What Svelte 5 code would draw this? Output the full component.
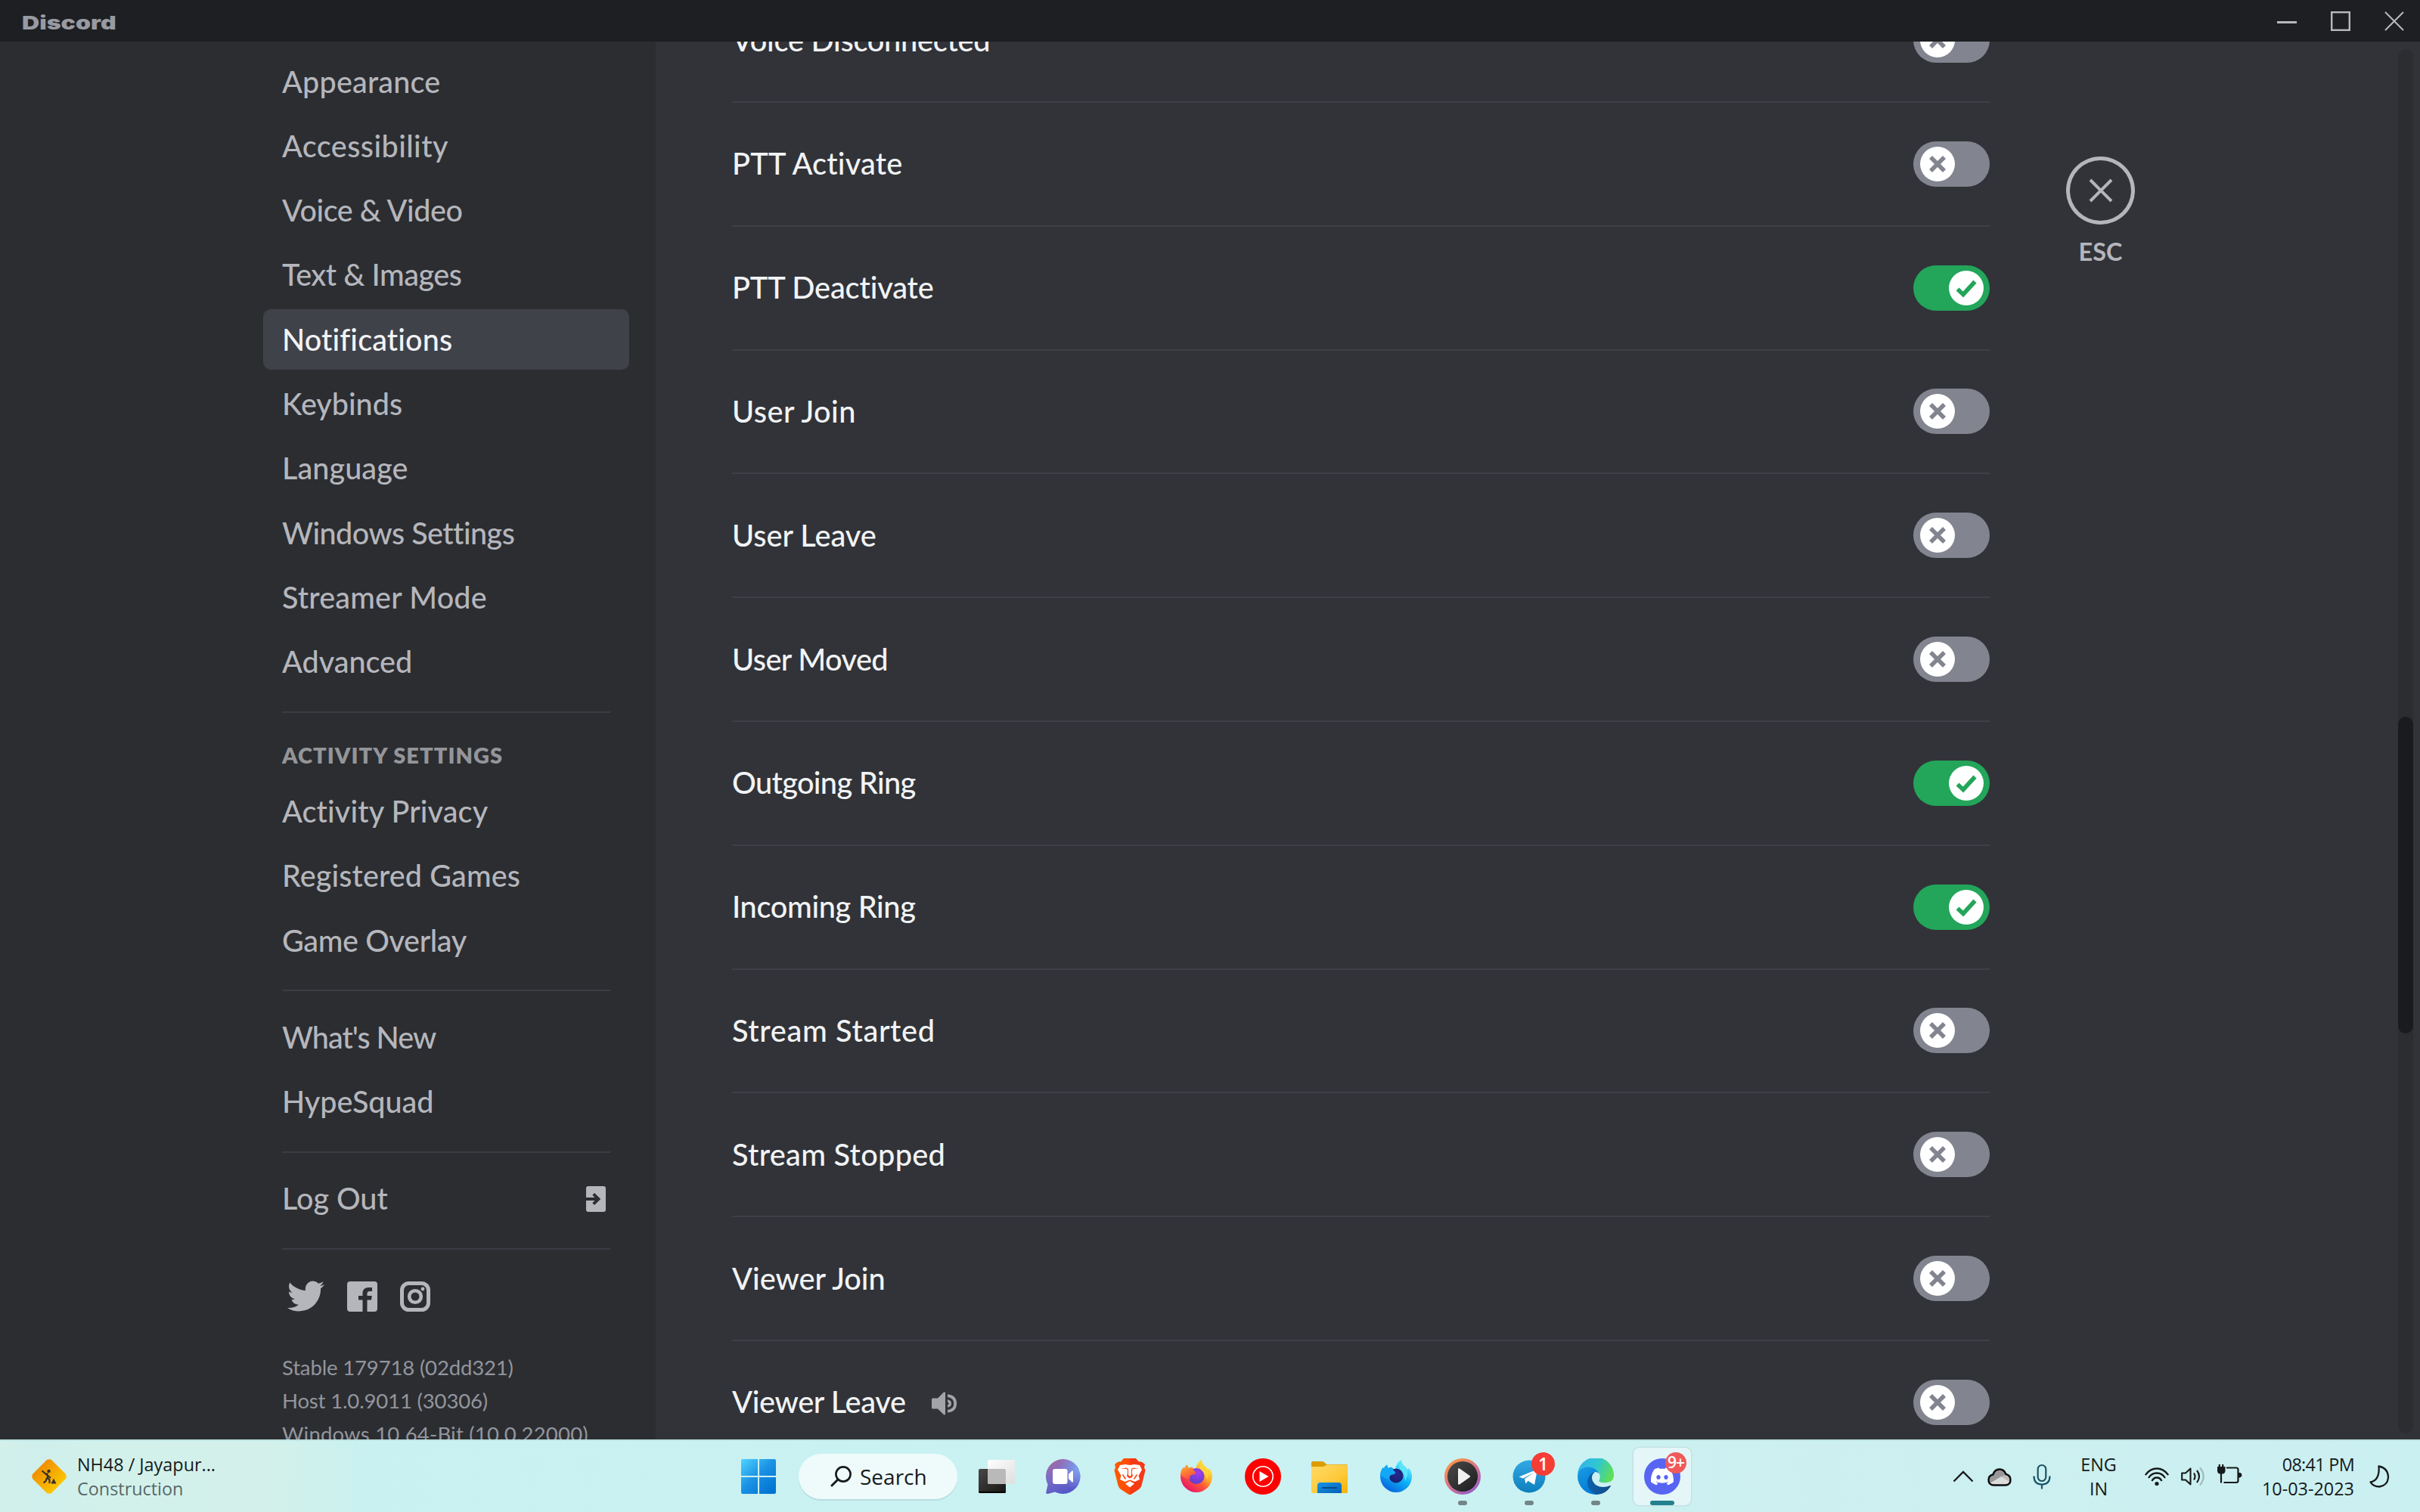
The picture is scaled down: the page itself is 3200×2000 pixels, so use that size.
<script>
  // `track` is the letter-spacing of a label in pixels.
  const nav = [
    { name: 'Appearance', track: 0.2 },
    { name: 'Accessibility', track: 0.45 },
    { name: 'Voice & Video', track: -0.45 },
    { name: 'Text & Images', track: -0.45 },
    { name: 'Notifications', track: 0.16, active: true },
    { name: 'Keybinds', track: 0 },
    { name: 'Language', track: 0.1 },
    { name: 'Windows Settings', track: -0.5 },
    { name: 'Streamer Mode', track: 0.2 },
    { name: 'Advanced', track: 0 }
  ];
  const activity = [
    { name: 'Activity Privacy', track: 0.15 },
    { name: 'Registered Games', track: 0.13 },
    { name: 'Game Overlay', track: -0.35 }
  ];
  const more = [
    { name: "What's New", track: -1 },
    { name: 'HypeSquad', track: 0 }
  ];
  const build = [
    { name: 'Stable 179718 (02dd321)', track: -0.15 },
    { name: 'Host 1.0.9011 (30306)', track: -0.15 },
    { name: 'Windows 10 64-Bit (10.0.22000)', track: 0.2 }
  ];
  const sounds = [
    { name: 'Voice Disconnected', track: -0.25, on: false },
    { name: 'PTT Activate', track: 0.2, on: false },
    { name: 'PTT Deactivate', track: -0.15, on: true },
    { name: 'User Join', track: 0.45, on: false },
    { name: 'User Leave', track: 0, on: false },
    { name: 'User Moved', track: -0.6, on: false },
    { name: 'Outgoing Ring', track: -0.65, on: true },
    { name: 'Incoming Ring', track: -0.35, on: true },
    { name: 'Stream Started', track: 0.65, on: false },
    { name: 'Stream Stopped', track: 0.3, on: false },
    { name: 'Viewer Join', track: 0, on: false },
    { name: 'Viewer Leave', track: -0.35, on: false, preview: true }
  ];
</script>

{#snippet entry(item)}
  <div class="item" class:active={item.active} style="letter-spacing: {item.track}px">{item.name}</div>
{/snippet}

<div class="screen">
  <header class="titlebar">
    <span class="wordmark">Discord</span>
    <div class="controls">
      <svg width="28" height="28" viewBox="0 0 28 28"><path d="M1 15.500H27" stroke-width="3" /></svg>
      <svg width="28" height="28" viewBox="0 0 28 28"><rect x="2.200" y="2.200" width="23.600" height="23.600" stroke-width="2.400" /></svg>
      <svg width="28" height="28" viewBox="0 0 28 28"><path d="M2 2L26 26M26 2L2 26" stroke-width="2" /></svg>
    </div>
  </header>

  <main class="window">
    <nav class="sidebar">
      {#each nav as item}{@render entry(item)}{/each}
      <hr />
      <h2>ACTIVITY SETTINGS</h2>
      {#each activity as item}{@render entry(item)}{/each}
      <hr />
      {#each more as item}{@render entry(item)}{/each}
      <hr />
      <div class="item">
        Log Out
        <svg class="logout" width="26" height="34" viewBox="0 0 26 34">
          <path fill="currentColor" d="M3 0H23Q26 0 26 3V31Q26 34 23 34H3Q0 34 0 31V19H11.500L8.300 22.200L11.100 25L19.200 17L11.100 9L8.300 11.800L11.500 15H0V3Q0 0 3 0Z" />
        </svg>
      </div>
      <hr />
      <div class="social">
        <svg width="49" height="49" viewBox="0 0 24 24"><path fill="currentColor" d="M23.953 4.570a10 10 0 01-2.825.775 4.958 4.958 0 002.163-2.723c-.951.555-2.005.959-3.127 1.184a4.920 4.920 0 00-8.384 4.482C7.690 8.095 4.067 6.130 1.640 3.162a4.822 4.822 0 00-.666 2.475c0 1.710.870 3.213 2.188 4.096a4.904 4.904 0 01-2.228-.616v.060a4.923 4.923 0 003.946 4.827 4.996 4.996 0 01-2.212.085 4.936 4.936 0 004.604 3.417 9.867 9.867 0 01-6.102 2.105c-.390 0-.779-.023-1.170-.067a13.995 13.995 0 007.557 2.209c9.053 0 13.998-7.496 13.998-13.985 0-.210 0-.420-.015-.630A9.935 9.935 0 0024 4.590z" /></svg>
        <svg width="40" height="40" viewBox="0 0 40 40"><path fill="currentColor" d="M4 0H36Q40 0 40 4V36Q40 40 36 40H26.500V24.500H32L32.800 19H26.500V16Q26.500 13 29.800 13H33V8H28.500Q20.500 8 20.500 16V19H15V24.500H20.500V40H4Q0 40 0 36V4Q0 0 4 0Z" /></svg>
        <svg width="40" height="40" viewBox="0 0 40 40" fill="none" stroke="currentColor"><rect x="2.500" y="2.500" width="35" height="35" rx="9" stroke-width="5" /><circle cx="20" cy="20" r="7.800" stroke-width="4.600" /><circle cx="30" cy="10" r="2.400" fill="currentColor" stroke="none" /></svg>
      </div>
      <div class="build">
        {#each build as line}
          <span style="letter-spacing: {line.track}px">{line.name}</span>
        {/each}
      </div>
    </nav>

    <section class="content">
      <div class="sounds">
        {#each sounds as s}
          <div class="row">
            <span class="label" style="letter-spacing: {s.track}px">{s.name}</span>
            {#if s.preview}
              <svg class="preview" width="33" height="31" viewBox="0 0 33 31"><path fill="currentColor" d="M1.500 8.500H8L16 .500Q18 -.300 18 1.500V29.500Q18 31 16 30.300L8 22.500H1.500Q0 22.500 0 21V10Q0 8.500 1.500 8.500ZM21 3.300Q33 4.500 33 15.500T21 27.500V24Q29.300 23 29.300 15.500T21 7ZM21 10.200Q26 11 26 15.500T21 20.600V17.500Q22.500 17 22.500 15.500T21 13.500Z" /></svg>
            {/if}
            <div class="toggle" class:on={s.on}>
              <div class="knob">
                <svg width="46" height="46" viewBox="0 0 46 46" fill="none" stroke="currentColor" stroke-width="5.600">
                  {#if s.on}<path d="M11.500 24.500L19 31.500L34.500 14.500" />{:else}<path d="M14 14L32 32M32 14L14 32" />{/if}
                </svg>
              </div>
            </div>
          </div>
        {/each}
      </div>
      <div class="close">
        <div class="ring">
          <svg width="34" height="34" viewBox="0 0 34 34"><path d="M3 3L31 31M31 3L3 31" stroke="currentColor" stroke-width="4" /></svg>
        </div>
        <span>ESC</span>
      </div>
      <div class="track"><div class="thumb"></div></div>
    </section>
  </main>

  <footer class="taskbar">
    <div class="widget">
      <svg width="46" height="46" viewBox="0 0 46 46">
        <defs><linearGradient id="sign" x1="0" y1="0" x2="1" y2="1"><stop offset=".2" stop-color="#f08c00" /><stop offset=".8" stop-color="#fcc800" /></linearGradient></defs>
        <path fill="url(#sign)" d="M19.500 1.500Q23 -1 26.500 1.500L44.500 19.500Q47 23 44.500 26.500L26.500 44.500Q23 47 19.500 44.500L1.500 26.500Q-1 23 1.500 19.500Z" />
        <circle cx="22.500" cy="16" r="2.200" fill="#36322c" />
        <path d="M13.500 15.500L25 25M17 19.500L20.500 19.500L21 25L23.500 27.500V32M20 25L18.500 29L15.500 31.500" stroke="#36322c" stroke-width="2.200" fill="none" />
        <path d="M25.500 32.500L29 25.500L32.500 32.500Z" fill="#36322c" />
      </svg>
      <div class="lines"><span>NH48 / Jayapur...</span><span class="dim">Construction</span></div>
    </div>

    <div class="apps">
      <div class="app">
        <svg width="46" height="46" viewBox="0 0 46 46">
          <defs><linearGradient id="win" gradientUnits="userSpaceOnUse" x1="0" y1="0" x2="40" y2="44"><stop offset="0" stop-color="#4fd4ff" /><stop offset=".5" stop-color="#1c93e4" /><stop offset="1" stop-color="#0073d2" /></linearGradient></defs>
          <path fill="url(#win)" d="M2 0H22V22H0V2Q0 0 2 0ZM24 0H44Q46 0 46 2V22H24ZM0 24H22V46H2Q0 46 0 44ZM24 24H46V44Q46 46 44 46H24Z" />
        </svg>
      </div>
      <div class="search">
        <svg width="28" height="28" viewBox="0 0 28 28" fill="none" stroke="#161a1b"><circle cx="17" cy="11" r="9.600" stroke-width="2.600" /><path d="M10 18L2 26" stroke-width="3" stroke-linecap="round" /></svg>
        <span>Search</span>
      </div>
      <div class="app">
        <svg width="48" height="48" viewBox="0 0 48 48">
          <defs><linearGradient id="tvd" x1="0" y1="0" x2="1" y2="1"><stop offset="0" stop-color="#4a4845" /><stop offset="1" stop-color="#161616" /></linearGradient><linearGradient id="tvl" x1="0" y1="0" x2="1" y2="1"><stop offset="0" stop-color="#fff" /><stop offset="1" stop-color="#dedede" /></linearGradient></defs>
          <rect x="0" y="14" width="36" height="32" rx="2" fill="url(#tvd)" /><path d="M0 44H36Q36 46 34 46H2Q0 46 0 44Z" fill="#000" />
          <rect x="12" y="2" width="36" height="32" rx="2" fill="url(#tvl)" /><path d="M12 14H34Q36 14 36 16V34H14Q12 34 12 32Z" fill="#b9b9b9" />
        </svg>
      </div>
      <div class="app">
        <svg width="48" height="48" viewBox="0 0 48 48">
          <defs><linearGradient id="chat" x1=".1" y1=".1" x2=".5" y2="1"><stop offset="0" stop-color="#a06aa8" /><stop offset=".45" stop-color="#7a6cc6" /><stop offset="1" stop-color="#5558c8" /></linearGradient><radialGradient id="chat2" cx=".95" cy=".3" r=".6"><stop offset="0" stop-color="#7ea2f2" /><stop offset="1" stop-color="#7ea2f2" stop-opacity="0" /></radialGradient></defs>
          <path fill="url(#chat)" d="M24 1A23 23 0 1 1 13 44.500L3.500 47Q1 47.500 1.200 45L3.500 34.500A23 23 0 0 1 24 1Z" /><path fill="url(#chat2)" d="M24 1A23 23 0 1 1 13 44.500L3.500 47Q1 47.500 1.200 45L3.500 34.500A23 23 0 0 1 24 1Z" />
          <rect x="10" y="14" width="19.500" height="20" rx="3" fill="#fff" /><path d="M31 21L35.500 16.500Q37 16 37 17.500V30.500Q37 32 35.500 31.500L31 27Z" fill="#fff" />
        </svg>
      </div>
      <div class="app">
        <svg width="48" height="48" viewBox="0 0 48 48">
          <defs><linearGradient id="brave" x1="0" y1="0" x2="1" y2="0"><stop offset="0" stop-color="#ff5a00" /><stop offset=".5" stop-color="#ff4a08" /><stop offset=".52" stop-color="#f43a14" /><stop offset="1" stop-color="#f53a18" /></linearGradient></defs>
          <path fill="url(#brave)" d="M16 0H32L36 4.500Q40 3.500 44 8L43 12L44.500 16L39.500 36Q38.500 39 36 41L26 47.500Q24 48.500 22 47.500L12 41Q9.500 39 8.500 36L3.500 16L5 12L4 8Q8 3.500 12 4.500Z" />
          <path fill="#fff" d="M24 9L30 8L37 9L40 15L35.500 23L37 28L30.500 31L24 28.500L17.500 31L11 28L12.500 23L8 15L11 9L18 8Z" />
          <path fill="#f8471a" d="M12 13.500L20 14L21 15.500V20L20 23L21 25L24 26.500L27 25L28 23L27 20V15.500L28 14L36 13.500L28.500 12.500L26 14V22L24 24L22 22V14L19.500 12.500Z" />
          <path d="M14.500 21.500L18.500 27.500M33.500 21.500L29.500 27.500" stroke="#f8471a" stroke-width="1.600" fill="none" />
          <path fill="#fff" d="M24 30L30 33.500L24 38.500L18 33.500Z" />
        </svg>
      </div>
      <div class="app">
        <svg width="48" height="48" viewBox="0 0 48 48">
          <defs><linearGradient id="ff" x1=".85" y1=".1" x2=".2" y2=".95"><stop offset="0" stop-color="#fff04a" /><stop offset=".35" stop-color="#ffb02a" /><stop offset=".6" stop-color="#ff5a36" /><stop offset="1" stop-color="#e6106e" /></linearGradient><linearGradient id="fft" x1="0" y1="0" x2=".5" y2="1"><stop offset="0" stop-color="#ffb62a" /><stop offset="1" stop-color="#ff4b3e" /></linearGradient><radialGradient id="ffp" cx=".6" cy=".3" r=".8"><stop offset="0" stop-color="#a93cf0" /><stop offset="1" stop-color="#5540c8" /></radialGradient></defs>
          <path fill="url(#ff)" d="M24 45A21 21 0 0 1 3 24Q3 16 7 12L8 14Q9 10 12 8.500L13 13Q18 12 23 15Q24 6 30.500 1.500Q31.500 8 37 12Q38.500 13 39 15L41 13Q45 18 45 24A21 21 0 0 1 24 45Z" />
          <circle cx="24" cy="23.500" r="10.500" fill="url(#ffp)" />
          <path fill="url(#fft)" d="M3.300 22Q4 15 7 12L8 14Q9 10 12 8.500L13.500 13Q17 10.500 20 13Q19 16 23.500 18L22 21L17.500 22Q14 24 16 28Q8 26 3.300 22Z" />
          <path fill="#ffd53a" d="M30.500 1.500Q31.500 8 37 12Q42 19 38 28Q36 20 29 14Q27 8 30.500 1.500Z" />
        </svg>
      </div>
      <div class="app">
        <svg width="48" height="48" viewBox="0 0 48 48"><circle cx="24" cy="24" r="24" fill="#f00" /><circle cx="24" cy="24" r="13.200" fill="none" stroke="#fff" stroke-width="1.600" /><path d="M19.500 17V31L31.500 24Z" fill="#fff" /></svg>
      </div>
      <div class="app">
        <svg width="48" height="48" viewBox="0 0 48 48">
          <defs><linearGradient id="fold" x1="0" y1="0" x2="1" y2="1"><stop offset="0" stop-color="#ffda68" /><stop offset=".6" stop-color="#fdc93a" /><stop offset="1" stop-color="#f5b100" /></linearGradient><linearGradient id="foldb" x1="0" y1="0" x2="1" y2="1"><stop offset="0" stop-color="#1795e6" /><stop offset="1" stop-color="#0560b5" /></linearGradient></defs>
          <path fill="#dc9c02" d="M2 4H14Q16 4 17.500 5.500L20 8H46Q48 8 48 10V14H0V6Q0 4 2 4Z" />
          <path fill="url(#fold)" d="M0 11H16L20.500 8.500H46.500Q48 8.500 48 10.500V44Q48 46 46 46H2Q0 46 0 44Z" />
          <path fill="url(#foldb)" d="M8 46V36Q8 32 12 32H36Q40 32 40 36V46Z" /><rect x="14" y="38" width="20" height="2" rx="1" fill="#064a8c" />
        </svg>
      </div>
      <div class="app">
        <svg width="48" height="48" viewBox="0 0 48 48">
          <defs><linearGradient id="dev" x1=".8" y1=".1" x2=".25" y2="1"><stop offset="0" stop-color="#6bf0ff" /><stop offset=".45" stop-color="#0fb4f8" /><stop offset="1" stop-color="#0560dc" /></linearGradient><radialGradient id="devp" cx=".55" cy=".4" r=".7"><stop offset="0" stop-color="#2a2790" /><stop offset="1" stop-color="#12206c" /></radialGradient></defs>
          <path fill="url(#dev)" d="M24 45A21 21 0 0 1 3 24Q3 16 7 12L8 14Q9 10 12 8.500L13 13Q18 12 23 15Q24 6 30.500 2Q31.500 8 37 12Q38.500 13 39 15L41 13Q45 18 45 24A21 21 0 0 1 24 45Z" />
          <circle cx="24" cy="23" r="9.500" fill="url(#devp)" />
          <path fill="#12a8f4" d="M3.300 22Q4 15 7 12L8 14Q9 10 12 8.500L13.500 13Q17 10.500 20 13Q19 16 23.500 18L22 21L17.500 22Q14 24 16 28Q8 26 3.300 22Z" />
          <path fill="#5be4fc" d="M30.500 2Q31.500 8 37 12Q42 19 36 30Q36 20 29 14Q27 8 30.500 2Z" />
        </svg>
      </div>
      <div class="app running">
        <svg width="48" height="48" viewBox="0 0 48 48">
          <defs><linearGradient id="mp" x1=".15" y1="0" x2=".85" y2="1"><stop offset="0" stop-color="#ff9a3c" /><stop offset=".5" stop-color="#d9738a" /><stop offset="1" stop-color="#8a5cd0" /></linearGradient><linearGradient id="mpi" x1="0" y1="0" x2="1" y2="1"><stop offset="0" stop-color="#4a4a4a" /><stop offset="1" stop-color="#1c1c1c" /></linearGradient></defs>
          <circle cx="24" cy="24" r="24" fill="url(#mp)" /><circle cx="24" cy="24" r="20" fill="url(#mpi)" /><path d="M18 14.500Q18 12.500 20 13.500L33.500 23Q34.800 24 33.500 25L20 34.500Q18 35.500 18 33.500Z" fill="#f0f0f0" />
        </svg>
        <i class="dot"></i>
      </div>
      <div class="app running">
        <svg width="48" height="48" viewBox="0 0 48 48">
          <defs><linearGradient id="tg" x1="0" y1="0" x2="0" y2="1"><stop offset="0" stop-color="#33a8e4" /><stop offset="1" stop-color="#0d7fbc" /></linearGradient></defs>
          <circle cx="24" cy="24" r="21.500" fill="url(#tg)" /><path d="M10.500 24.500L35 14.500L31 35L22.500 29.800L19.500 33.500L18 27L31 18.500L16 26.500Z" fill="#fff" />
        </svg>
        <b class="badge one">1</b>
        <i class="dot"></i>
      </div>
      <div class="app running">
        <svg width="48" height="48" viewBox="0 0 48 48">
          <defs><linearGradient id="eg" x1="0" y1=".3" x2="1" y2=".6"><stop offset="0" stop-color="#35b4ee" /><stop offset=".5" stop-color="#2fc7cf" /><stop offset="1" stop-color="#62e050" /></linearGradient><linearGradient id="eb" x1="0" y1="0" x2=".6" y2="1"><stop offset="0" stop-color="#1b9de4" /><stop offset="1" stop-color="#0078d4" /></linearGradient><linearGradient id="ed" x1="0" y1="0" x2="1" y2="0"><stop offset="0" stop-color="#0a62ae" /><stop offset="1" stop-color="#164a86" /></linearGradient></defs>
          <path fill="url(#eg)" d="M0 22A24 24 0 0 1 48 23Q47.500 31.500 38 32.200Q30 32.500 28.500 30.500Q28 29.500 29.200 28Q30 26 29.500 22Q27 12 14 12Q4 13 0 22Z" />
          <path fill="url(#eb)" d="M0 24Q1 12 14 11.500Q26 12 29 21Q26 17 21.500 18.500Q14 22 15 34Q17 43 27 47.700A24 24 0 0 1 0 24Z" />
          <path fill="url(#ed)" d="M18 20.500Q20 18 23 18Q17 23 20 30Q24 38 34 38Q39 38 43 36Q44.500 35.500 43.500 37.500Q37 47.500 26 48Q13 43 13 32Q13 25 18 20.500Z" />
        </svg>
        <i class="dot"></i>
      </div>
      <div class="app running current">
        <svg width="48" height="48" viewBox="0 0 48 48"><circle cx="24" cy="24" r="24" fill="#5865f2" /><g transform="translate(9 8.900) scale(1.250)"><path fill="#fff" d="M20.317 4.370a19.791 19.791 0 00-4.885-1.515.074.074 0 00-.079.037c-.211.375-.445.865-.608 1.250-1.845-.276-3.680-.276-5.487 0-.164-.393-.406-.874-.618-1.250a.077.077 0 00-.079-.037 19.736 19.736 0 00-4.885 1.515.070.070 0 00-.032.028C.533 9.046-.319 13.580.099 18.058a.082.082 0 00.031.056c2.053 1.508 4.041 2.423 5.993 3.029a.078.078 0 00.084-.028c.462-.630.873-1.295 1.226-1.994a.076.076 0 00-.042-.106c-.653-.248-1.274-.550-1.872-.892a.077.077 0 01-.008-.128c.126-.094.252-.192.372-.291a.074.074 0 01.078-.011c3.928 1.793 8.180 1.793 12.061 0a.074.074 0 01.079.010c.120.099.246.198.373.292a.077.077 0 01-.007.128 12.299 12.299 0 01-1.873.891.077.077 0 00-.041.107c.360.698.772 1.363 1.225 1.993a.076.076 0 00.084.029c1.961-.607 3.950-1.522 6.002-3.029a.077.077 0 00.031-.055c.500-5.177-.838-9.674-3.549-13.660a.061.061 0 00-.031-.029zM8.020 15.331c-1.183 0-2.157-1.086-2.157-2.419 0-1.333.956-2.419 2.157-2.419 1.211 0 2.176 1.095 2.157 2.419 0 1.333-.956 2.419-2.157 2.419zm7.975 0c-1.183 0-2.157-1.086-2.157-2.419 0-1.333.955-2.419 2.157-2.419 1.211 0 2.176 1.095 2.157 2.419 0 1.333-.946 2.419-2.157 2.419z" /></g></svg>
        <b class="badge nine">9+</b>
        <i class="dot"></i>
      </div>
    </div>

    <div class="tray">
      <svg width="28" height="28" viewBox="0 0 28 28" fill="none" stroke="#161a1b" stroke-width="2.300"><path d="M1.500 20.500L14 8L26.500 20.500" /></svg>
      <svg class="cloud" width="32" height="28" viewBox="0 0 32 28">
        <path d="M8 25.500Q1.500 25 1.500 18.500Q1.500 12.500 7.500 11.500Q9.500 4.500 16 4.500Q22 4.500 24.500 11Q30.500 12.500 30.500 18.500Q30.500 25 24 25.500Z" fill="#989898" /><path d="M3 23L18.500 14L30 21Q29 25.500 24 25.500H8Q4.500 25 3 23Z" fill="#dcdcdc" /><path d="M18.500 14L25 11.200Q30.500 12.500 30 21Z" fill="#bcbcbc" />
        <path d="M8 25.500Q1.500 25 1.500 18.500Q1.500 12.500 7.500 11.500Q9.500 4.500 16 4.500Q22 4.500 24.500 11Q30.500 12.500 30.500 18.500Q30.500 25 24 25.500Z" fill="none" stroke="#0c0c0c" stroke-width="2.400" />
      </svg>
      <svg class="mic" width="24" height="34" viewBox="0 0 24 34" fill="none" stroke="#1b5566" stroke-width="2.200"><rect x="6.700" y="2" width="10.600" height="21" rx="5.300" /><path d="M1.500 16.500Q1.500 27.500 12 27.500T22.500 16.500M12 27.500V33.500" /></svg>
      <div class="lang"><span>ENG</span><span>IN</span></div>
      <svg class="wifi" width="32" height="26" viewBox="0 0 32 26" fill="none" stroke="#161a1b" stroke-width="2.300"><path d="M.800 11Q7 2.500 16 2.500T31.200 11M5 15Q9 8.500 16 8.500T27 15M9.500 19Q11.500 14.500 16 14.500T22.500 19" /><circle cx="16" cy="22.500" r="2.600" fill="#161a1b" stroke="none" /></svg>
      <svg class="vol" width="32" height="28" viewBox="0 0 32 28" fill="none" stroke="#161a1b" stroke-width="2.100"><path d="M1.200 9.500H6L12.500 3.500V24.500L6 18.500H1.200Z" stroke-linejoin="round" /><path d="M17 9.500Q20 14 17 18.500M21 6Q27 14 21 22" /><path d="M25 2.500Q34.500 14 25 25.500" opacity=".25" /></svg>
      <svg class="battery" width="34" height="30" viewBox="0 0 34 30" fill="none" stroke="#161a1b" stroke-width="2.200"><path d="M12 6.500H25Q27.500 6.500 27.500 9V23.500Q27.500 26 25 26H8.500M5 12V26.500M2.800 2V6M7.200 2V6" /><path d="M0 5H10.500V11Q10.500 13.500 8 14.500H2.500Q0 13.500 0 11ZM28 13H30Q32.500 13.500 32.500 16.200T30 19.500H28Z" fill="#161a1b" stroke="none" /></svg>
      <div class="clock"><span class="time">08:41 PM</span><span>10-03-2023</span></div>
      <svg class="moon" width="27" height="30" viewBox="0 0 27 30" fill="none" stroke="#161a1b" stroke-width="2.300"><path d="M12.500 1.500Q25 4 25 16.500Q24 27 13.500 28.500Q5 28.500 1.500 22.500Q14 20 12.500 1.500Z" stroke-linejoin="round" /></svg>
    </div>
  </footer>
</div>

<style>
  :global(body) { margin: 0; background: #313338; }
  .screen { width: 3200px; height: 2000px; display: flex; flex-direction: column; overflow: hidden; font-family: Lato, "Liberation Sans", sans-serif; font-variant-ligatures: none; }
  svg { display: block; flex: none; }

  .titlebar { flex: none; height: 55px; background: #1e1f22; display: flex; align-items: center; justify-content: space-between; padding: 0 20px 0 29px; box-sizing: border-box; }
  .wordmark { font: 900 24.500px/30px Inter, sans-serif; color: #989aa2; transform: scaleX(1.310); transform-origin: left; padding-top: 5px; }
  .controls { display: flex; gap: 43px; }
  .controls svg { fill: none; stroke: #b8b9be; }

  .window { flex: none; height: 1849px; display: flex; overflow: hidden; }
  .sidebar { width: 867px; flex: none; box-sizing: border-box; background: #2b2d31; padding: 13px 35px 0 348px; color: #b5b6bc; }
  .item { box-sizing: border-box; height: 80px; margin-bottom: 5.300px; padding: 0 31px 2px 25px; border-radius: 10px; display: flex; align-items: center; justify-content: space-between; font-size: 39.500px; font-weight: 500; white-space: nowrap; }
  .item.active { background: #404249; color: #f2f3f5; }
  hr { border: 0; height: 2px; background: #3c3d44; margin: 25px 25px 21px; }
  h2 { margin: 0 25px; height: 70px; line-height: 69px; font-size: 29px; font-weight: 800; letter-spacing: 1.050px; color: #949599; }
  .social { display: flex; align-items: center; margin: 42px 0 0 32px; height: 40px; }
  .social svg + svg { margin-left: 30px; }
  .logout { margin-top: 2px; }
  .build { margin: 52px 0 0 25px; display: flex; flex-direction: column; font-size: 27.500px; line-height: 44px; color: #93959d; white-space: nowrap; }

  .content { flex: 1; display: flex; background: #313338; align-items: flex-start; }
  .sounds { width: 1663px; margin: -82.800px 0 0 101px; }
  .row { height: 161.800px; border-bottom: 2px solid #3e4047; display: flex; align-items: center; color: #f2f3f5; }
  .label { font-size: 39.700px; font-weight: 500; white-space: nowrap; padding-bottom: 2px; }
  .preview { margin-left: 34px; margin-top: 3px; color: #a3a4a8; }
  .toggle { margin-left: auto; width: 101px; height: 60px; border-radius: 30px; background: #82848f; color: #82848f; padding: 0 8px 0 9px; box-sizing: border-box; display: flex; align-items: center; }
  .toggle.on { background: #23a55a; color: #23a55a; justify-content: flex-end; }
  .knob { width: 46px; height: 46px; border-radius: 50%; background: #fff; }

  .close { margin: 152px 0 0 101px; width: 91px; display: flex; flex-direction: column; align-items: center; color: #b5b6bc; }
  .ring { width: 91px; height: 90px; box-sizing: border-box; border: 5px solid; border-radius: 50%; display: flex; align-items: center; justify-content: center; }
  .close span { margin-top: 16px; font-size: 32.500px; line-height: 40px; font-weight: 700; }
  .track { margin: 10px 0 0 348px; width: 20px; height: 1831px; border-radius: 10px; background: #2b2d31; display: flex; align-items: flex-start; }
  .thumb { margin-top: 883px; width: 20px; height: 419px; border-radius: 10px; background: #1a1b1e; }

  .taskbar { flex: none; height: 96px; box-sizing: border-box; border-top: 2px solid #bee4e3; background: linear-gradient(90deg, #d3f0ea 0, #cfefec 50px, #d3f1eb 130px, #d3f1ea 360px, #c9f1f1 480px, #caf2f2 2000px, #cdeff0 2400px, #cbf0f1 3200px); display: flex; align-items: center; font-family: "Open Sans", "Noto Sans", sans-serif; color: #161a1b; }
  .widget { flex: none; width: 959px; padding-left: 42px; display: flex; align-items: center; gap: 14px; box-sizing: border-box; }
  .lines, .lang, .clock { display: flex; flex-direction: column; font-size: 23.400px; line-height: 32px; white-space: nowrap; }
  .dim { color: #56686a; }
  .apps { display: flex; align-items: center; flex: none; }
  .app { width: 88px; height: 76px; position: relative; display: flex; align-items: center; justify-content: center; }
  .search { width: 210px; height: 60px; margin: 0 8px 0 9px; border-radius: 30px; background: #effbfb; box-shadow: 0 2px 0 #b9dedf; display: flex; align-items: center; padding-left: 42px; box-sizing: border-box; gap: 11px; font-size: 28px; }
  .current { width: 76px; margin: 0 6px; border-radius: 8px; background: #e4f6f8; box-shadow: 0 0 0 1.500px #c3e2e5; }
  .dot { position: absolute; bottom: 0; left: 50%; width: 12px; height: 6px; margin-left: -6px; border-radius: 3px; background: #728586; }
  .current .dot { width: 32px; margin-left: -16px; background: #23818f; }
  .badge { position: absolute; border-radius: 50%; color: #fff; text-align: center; font-weight: 600; }
  .one { width: 31px; height: 31px; left: 47px; top: 6px; background: #f63d35; font-size: 23px; line-height: 31px; }
  .nine { width: 28px; height: 28px; left: 42px; top: 6px; background: #f05a5a; font-size: 21px; line-height: 27px; letter-spacing: -1px; }

  .tray { display: flex; align-items: center; margin-left: auto; padding-right: 40px; }
  .cloud { margin-left: 18px; }
  .mic { margin-left: 28px; }
  .lang { margin-left: 40px; width: 46px; align-items: center; }
  .wifi { margin-left: 38px; }
  .vol { margin-left: 16px; }
  .battery { margin-left: 16px; margin-top: -6px; }
  .clock { width: 147px; align-items: flex-end; }
  .time { letter-spacing: -.700px; }
  .moon { margin-left: 20px; }
</style>
